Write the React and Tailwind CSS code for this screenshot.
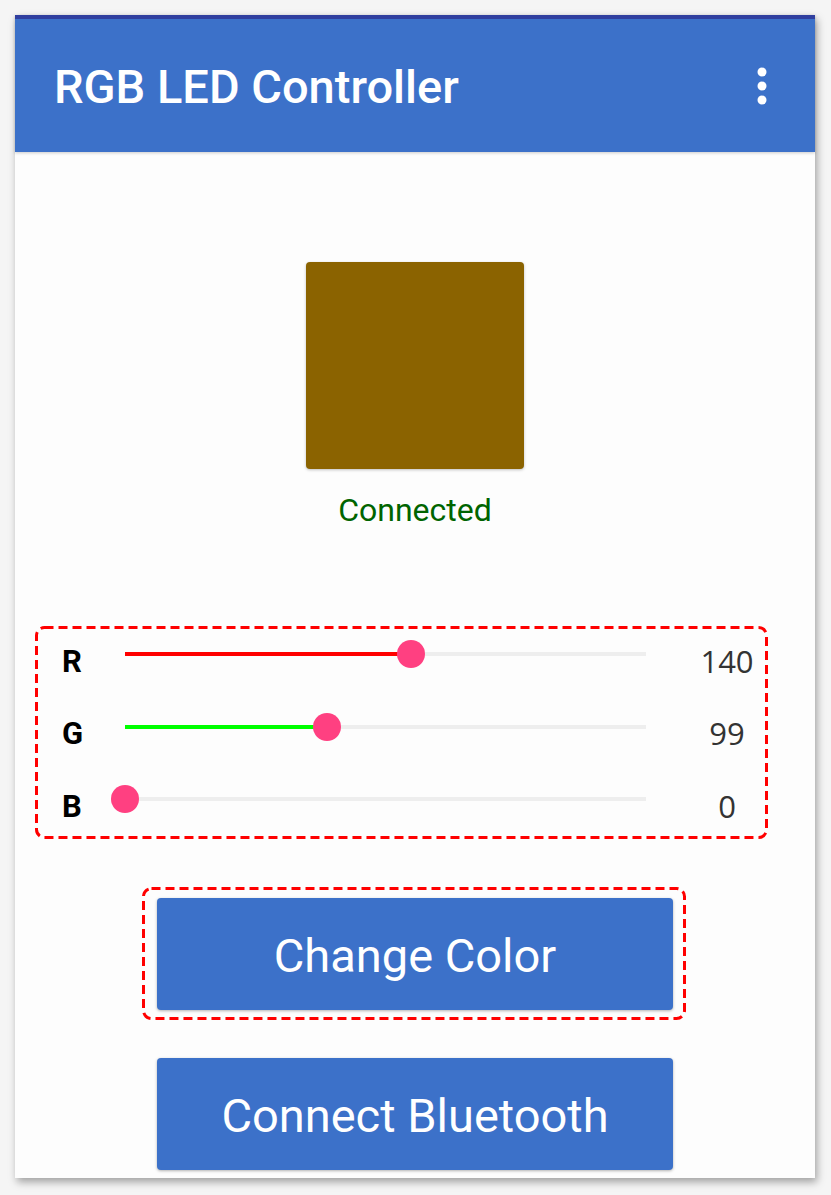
import React from "react";

const channels = [
  { label: "R", value: 140, fill: "bg-[#ff0000]" },
  { label: "G", value: 99, fill: "bg-[#00ff00]" },
  { label: "B", value: 0, fill: "bg-[#ff0000]" },
];

function Slider({ value, fill }) {
  const pct = (value / 255) * 100;
  return (
    <div className="relative w-[521px] h-[4px] bg-[#eeeeee]">
      <div className={`absolute left-0 top-0 h-full ${fill}`} style={{ width: `${pct}%` }} />
      <div
        className="absolute top-1/2 w-[28px] h-[28px] -translate-x-1/2 -translate-y-1/2 rounded-full bg-[#ff4081]"
        style={{ left: `${pct}%` }}
      />
    </div>
  );
}

// dashed red outline, drawn over its box
function DashedOutline() {
  return (
    <svg className="absolute inset-0 w-full h-full pointer-events-none overflow-visible">
      <rect
        x="1.5"
        y="1.5"
        width="calc(100% - 3px)"
        height="calc(100% - 3px)"
        rx="8"
        fill="none"
        stroke="#ff0000"
        strokeWidth="3"
        strokeDasharray="9 5"
      />
    </svg>
  );
}

export default function App() {
  return (
    <div className="min-h-screen bg-[#f5f5f5] pt-[15px] pl-[15px] font-['Roboto',sans-serif]">
      <div className="w-[800px] h-[1163px] flex flex-col bg-[#fdfdfd] shadow-[2px_4px_8px_rgba(0,0,0,0.35)]">
        <div className="h-[137px] border-t-4 border-[#303f9f] bg-[#3c71c9] flex items-center justify-between pl-[39px] pr-[48px] shadow-[0_1px_3px_rgba(0,0,0,0.2)]">
          <h1 className="text-white text-[47px] font-medium leading-none pt-[2px]">RGB LED Controller</h1>
          <svg width="10" height="38" viewBox="0 0 10 38" className="text-white">
            <circle cx="5" cy="5" r="4.5" fill="currentColor" />
            <circle cx="5" cy="19" r="4.5" fill="currentColor" />
            <circle cx="5" cy="33" r="4.5" fill="currentColor" />
          </svg>
        </div>

        <div className="flex flex-col items-center pt-[110px]">
          <div className="w-[218px] h-[207px] rounded-[4px] bg-[#8b6300] shadow-[0_1px_3px_rgba(0,0,0,0.25)]" />
          <p className="mt-[22px] text-[32px] leading-[38px] text-[#006400]">Connected</p>
        </div>

        <div className="relative ml-[20px] mt-[97px] w-[733px] h-[213px] p-[3px] pt-[12px] flex flex-col gap-[40.5px]">
          <DashedOutline />
          {channels.map((c) => (
            <div key={c.label} className="flex items-center h-[32px]">
              <span className="w-[87px] pl-[24px] pt-[14px] text-[31px] font-bold text-black leading-none">{c.label}</span>
              <Slider value={c.value} fill={c.fill} />
              <span className="ml-[46px] w-[70px] pt-[14px] text-center text-[31px] leading-none text-[#333333] font-['Open_Sans',sans-serif]">
                {c.value}
              </span>
            </div>
          ))}
        </div>

        <div className="relative ml-[127px] mt-[48px] w-[544px] h-[133px] pt-[11px] pl-[15px]">
          <DashedOutline />
          <button className="w-[516px] h-[112px] rounded-[4px] bg-[#3c71c9] text-white text-[47px] pt-[4px] shadow-[0_1px_3px_rgba(0,0,0,0.3)]">
            Change Color
          </button>
        </div>

        <div className="pl-[142px] mt-[38px]">
          <button className="w-[516px] h-[112px] rounded-[4px] bg-[#3c71c9] text-white text-[47px] pt-[4px] shadow-[0_1px_3px_rgba(0,0,0,0.3)]">
            Connect Bluetooth
          </button>
        </div>
      </div>
    </div>
  );
}
